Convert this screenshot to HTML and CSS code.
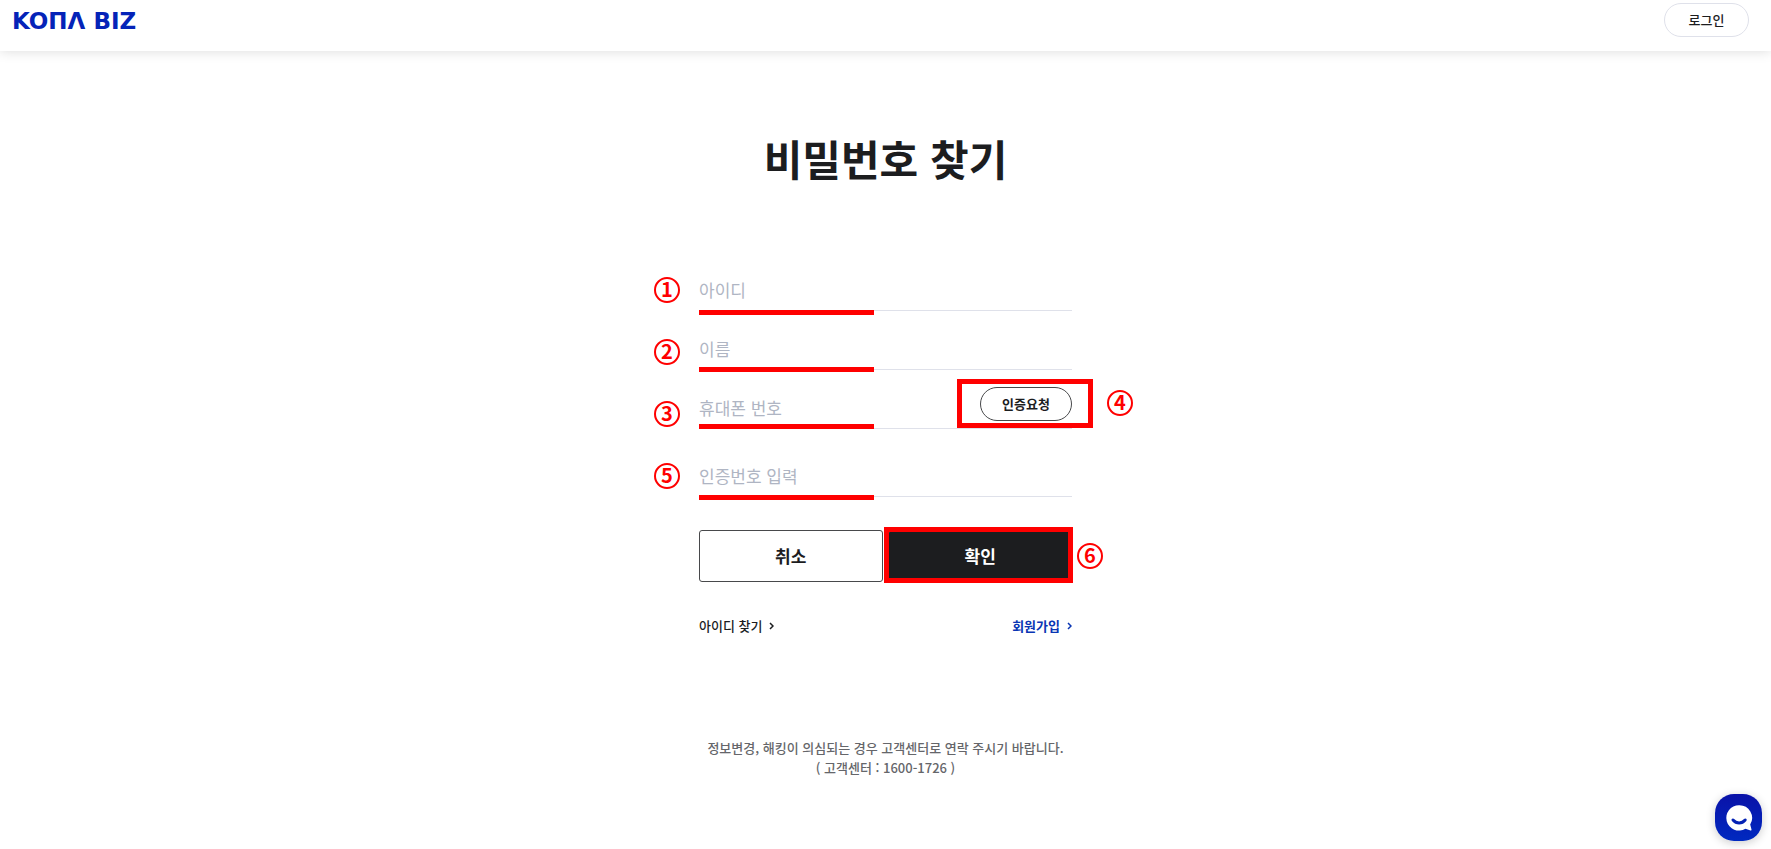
FILE: index.html
```html
<!DOCTYPE html>
<html lang="ko">
<head>
  <meta charset="UTF-8">
  <meta name="viewport" content="width=device-width, initial-scale=1.0">
  <title>비밀번호 찾기</title>
  <link rel="stylesheet" href="styles.css">
</head>
<body>
  <header class="header">
    <a class="logo" href="#">KOΠΛ BIZ</a>
    <button type="button" class="pill login">로그인</button>
  </header>

  <main class="content">
    <h1>비밀번호 찾기</h1>

    <form class="find-form">
      <div class="field">
        <input type="text" id="userId" placeholder="아이디" aria-label="아이디">
      </div>
      <div class="field">
        <input type="text" id="userName" placeholder="이름" aria-label="이름">
      </div>
      <div class="field">
        <input type="tel" id="phone" placeholder="휴대폰 번호" aria-label="휴대폰 번호">
        <button type="button" class="pill request">인증요청</button>
      </div>
      <div class="field code">
        <input type="text" id="code" placeholder="인증번호 입력" aria-label="인증번호 입력">
      </div>

      <div class="buttons">
        <button type="button" class="btn">취소</button>
        <button type="submit" class="btn confirm">확인</button>
        <div class="box box-confirm"><span class="num">6</span></div>
      </div>

      <div class="links">
        <a href="#">아이디 찾기
          <svg width="5" height="8" viewBox="0 0 5 8"><path d="M1 1l3 3-3 3"/></svg>
        </a>
        <a href="#" class="join">회원가입
          <svg width="5" height="8" viewBox="0 0 5 8"><path d="M1 1l3 3-3 3"/></svg>
        </a>
      </div>

      <!-- guide marks -->
      <div class="nums">
        <span class="num">1</span>
        <span class="num">2</span>
        <span class="num">3</span>
        <span class="num">5</span>
      </div>
      <div class="underlines">
        <i></i>
        <i></i>
        <i></i>
        <i class="last"></i>
      </div>
      <div class="box box-request"><span class="num">4</span></div>
    </form>

    <p class="notice">정보변경, 해킹이 의심되는 경우 고객센터로 연락 주시기 바랍니다.<br>( 고객센터 : 1600-1726 )</p>
  </main>

  <button type="button" class="chat" aria-label="채팅 상담">
    <svg width="47" height="47" viewBox="0 0 47 47">
      <path fill="#fff" d="M24 11.200a12.700 12.700 0 1 0 6.500 23.600l5 1.800c.7.100 1.100-.4 1-1l-1.300-5.100A12.700 12.700 0 0 0 24 11.200z"/>
      <path fill="none" stroke="#0422b4" stroke-width="3" stroke-linecap="round" d="M18 26c3.400 4 8.800 4 12.200 0"/>
    </svg>
  </button>
</body>
</html>
```

FILE: styles.css
```css
* {
  box-sizing: border-box;
}

body {
  margin: 0;
  font-family: "Noto Sans CJK KR", sans-serif;
  font-size: 13px;
  font-weight: 500;
  color: #1c1d1f;
  background: #fff;
}

button, input {
  font-family: inherit;
  color: inherit;
}

button {
  padding: 0;
  cursor: pointer;
}

a {
  color: inherit;
  text-decoration: none;
}

/* Header */
.header {
  display: flex;
  justify-content: space-between;
  height: 51px;
  padding: 3px 22px 0 12px;
  box-shadow: 0 0 12px rgba(0, 0, 0, 0.15);
}

.logo {
  font-family: "DejaVu Sans", sans-serif;
  font-size: 23px;
  font-weight: 700;
  line-height: 36px;
  color: #0523b8;
}

.pill {
  height: 34px;
  padding-bottom: 2px;
  border: 1px solid #48494b;
  border-radius: 17px;
  background: #fff;
  font-size: 13px;
  font-weight: 700;
}

.login {
  width: 85px;
  border-color: #dfe1ea;
  font-weight: 500;
}

/* Form */
h1 {
  margin: 76px 0 83px;
  font-size: 42px;
  font-weight: 700;
  line-height: 62px;
  text-align: center;
}

.find-form {
  position: relative;
  width: 373px;
  margin: 0 auto;
}

.field {
  display: flex;
  align-items: flex-start;
  height: 59px;
  padding-top: 20px;
  border-bottom: 1px solid #dfe1ea;
}

.field.code {
  height: 68px;
  padding-top: 29px;
}

.field:first-child {
  height: 39px;
  padding-top: 0;
}

.field input {
  flex: 1;
  min-width: 0;
  height: 34px;
  padding: 0;
  border: 0;
  outline: 0;
  background: none;
  font-size: 17px;
}

.field input::placeholder {
  color: #afb5c3;
  opacity: 1;
}

.request {
  width: 92px;
  margin-top: -3px;
}

.buttons {
  position: relative;
  display: flex;
  gap: 6px;
  margin-top: 33px;
}

.btn {
  flex: 1;
  height: 52px;
  padding-bottom: 2px;
  border: 1px solid #48494b;
  border-radius: 3px;
  background: #fff;
  font-size: 17px;
  font-weight: 700;
}

.confirm {
  border-color: #1c1d1f;
  background: #1c1d1f;
  color: #fff;
}

.links {
  display: flex;
  justify-content: space-between;
  margin-top: 34px;
  line-height: 20px;
}

.links a {
  display: flex;
  align-items: center;
  gap: 7px;
}

.links svg {
  fill: none;
  stroke: currentColor;
  stroke-width: 1.5;
}

.links .join {
  font-weight: 700;
  color: #0a36b4;
}

.notice {
  margin: 102px 0 0;
  line-height: 20px;
  color: #65666a;
  text-align: center;
}

/* Guide marks */
.num {
  display: block;
  width: 26px;
  height: 26px;
  border: 2px solid #f00;
  border-radius: 50%;
  font-size: 20px;
  font-weight: 700;
  line-height: 20px;
  text-align: center;
  color: #f00;
}

.nums {
  position: absolute;
  top: 5px;
  left: -45px;
  display: flex;
  flex-direction: column;
  gap: 36px;
}

.underlines {
  position: absolute;
  top: 38px;
  left: 0;
  display: flex;
  flex-direction: column;
  gap: 52px;
}

.underlines i {
  width: 175px;
  height: 5px;
  background: #f00;
}

.underlines .last {
  margin-top: 14px;
}

.box {
  position: absolute;
  border: 5px solid #f00;
}

.box .num {
  position: absolute;
}

.box-request {
  top: 107px;
  right: -21px;
  width: 136px;
  height: 49px;
}

.box-request .num {
  top: 6px;
  right: -45px;
}

.box-confirm {
  top: -3px;
  right: -1px;
  width: 189px;
  height: 56px;
}

.box-confirm .num {
  top: 11px;
  right: -35px;
}

/* Chat */
.chat {
  position: fixed;
  right: 9px;
  bottom: 8px;
  width: 47px;
  height: 47px;
  border: 0;
  border-radius: 19px;
  background: linear-gradient(#0a12a8, #0029c0);
  box-shadow: 0 2px 10px rgba(0, 0, 0, 0.2);
}

.chat svg {
  display: block;
}
```
